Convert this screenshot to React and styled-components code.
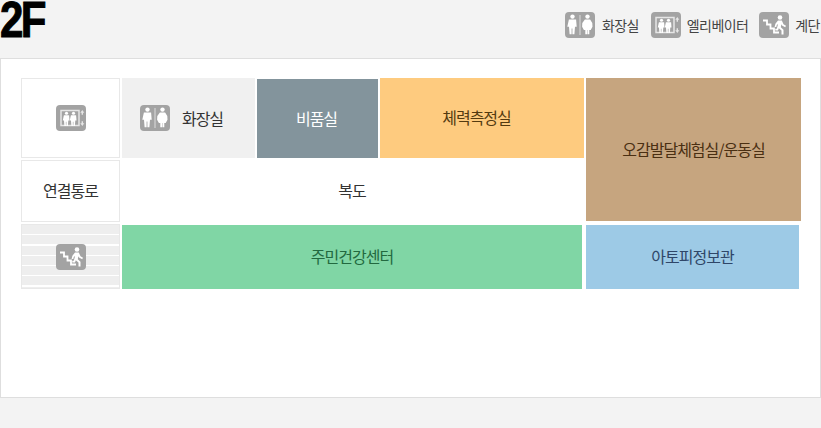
import React from "react";
import styled, { createGlobalStyle } from "styled-components";

const GlobalStyle = createGlobalStyle`
  html, body {
    margin: 0;
    padding: 0;
    background: #f3f3f3;
    overflow: hidden;
    font-family: "Noto Sans CJK KR", "Noto Sans", sans-serif;
  }
`;

const Person = ({ x, y = 0, scale = 1, fill = "#fff" }) => (
  <g transform={`translate(${x} ${y}) scale(${scale})`} fill={fill}>
    <circle cx="0" cy="-7.4" r="2.2" />
    <path d="M-3.600 -4.600h7.200l.6 7.400h-1.700l-.6 7.400h-2v-5.800h-.8v5.800h-2l-.6-7.400h-1.700z" />
  </g>
);

const Lady = ({ x, y = 0, scale = 1, fill = "#fff" }) => (
  <g transform={`translate(${x} ${y}) scale(${scale})`} fill={fill}>
    <circle cx="0" cy="-7.400" r="2.200" />
    <path d="M-2.600 -4.600h5.200l2.200 3.600 .2 3.800 -1.800 3.200h-1.400v4.200h-1.800v-4.200h-.4v4.200h-1.800v-4.200h-1.400l-1.800-3.200 .2-3.800z" />
  </g>
);

const ToiletIcon = () => (
  <IconSvg viewBox="0 0 30 26">
    <rect width="30" height="26" rx="4" fill="#a3a3a3" />
    <Person x={7.500} y={12} />
    <rect x="14.400" y="3" width="1.200" height="20" fill="#d4d4d4" />
    <Lady x={22.500} y={12} />
  </IconSvg>
);

const ElevatorIcon = () => (
  <IconSvg viewBox="0 0 30 26">
    <rect width="30" height="26" rx="4" fill="#a3a3a3" />
    <rect x="5" y="5.500" width="18" height="15" fill="none" stroke="#e6e6e6" strokeWidth="1.500" />
    <Person x={10.500} y={13.600} scale={0.72} />
    <Person x={17.500} y={13.600} scale={0.72} />
    <path d="M26.300 5l2 2.800h-1.300v2h-1.400v-2h-1.300zM26.300 21l2-2.800h-1.300v-2h-1.400v2h-1.300z" fill="#e6e6e6" />
  </IconSvg>
);

const StairsIcon = () => (
  <IconSvg viewBox="0 0 30 26">
    <rect width="30" height="26" rx="4" fill="#a3a3a3" />
    <path d="M4 8.500h4v4h3.500v4h3.500v4h5" fill="none" stroke="#fff" strokeWidth="1.800" />
    <circle cx="21" cy="5.500" r="2.300" fill="#fff" />
    <path d="M19 8.500h3.800l1.700 3.800 2.500 1.500-.8 1.400-3.200-1.600-.7-1.400-.5 3 2.700 2.600v4.700h-2v-3.900l-2.700-2.400-.8 2.300h-2.700v-1.800h1.500l1.300-4.800-1.300 1-.5 2h-1.700l.8-3.200z" fill="#fff" />
  </IconSvg>
);

const IconSvg = styled.svg`
  display: block;
  width: 30px;
  height: 26px;
  flex: none;
`;

const Page = styled.div`
  width: 821px;
  height: 428px;
  overflow: hidden;
  background: #f3f3f3;
`;

const Header = styled.header`
  height: 58px;
  display: flex;
  justify-content: space-between;
  align-items: flex-start;
`;

const FloorTitle = styled.h1`
  margin: 0;
  font-family: "Liberation Sans", Arial, sans-serif;
  font-size: 50px;
  font-weight: 700;
  line-height: 40px;
  letter-spacing: -3px;
  color: #000;
  -webkit-text-stroke: 1px #000;
  transform: scaleX(0.84);
  transform-origin: left top;
`;

const Legend = styled.ul`
  list-style: none;
  margin: 0;
  padding: 12px 0 0;
  display: flex;
  flex: none;
  width: 256px;
  gap: 11px;
  white-space: nowrap;
`;

const LegendItem = styled.li`
  display: flex;
  align-items: center;
  gap: ${(p) => p.$gap || "6px"};
  margin-right: ${(p) => p.$after || 0};
  font-size: 14px;
  line-height: 24px;
  letter-spacing: -0.6px;
  color: #444;
`;

const Panel = styled.main`
  box-sizing: border-box;
  width: 821px;
  height: 340px;
  background: #fff;
  border: 1px solid #dedede;
  padding: 19px 20px;
`;

const Plan = styled.div`
  display: grid;
  grid-template-columns: 99px 133px 121px 204px 215px;
  grid-template-rows: 80px 62px 65px;
  gap: 2px;
`;

const Room = styled.div`
  grid-column: ${(p) => p.$col || "auto"};
  grid-row: ${(p) => p.$row || "auto"};
  display: flex;
  align-items: center;
  justify-content: center;
  font-size: 16px;
  line-height: 22px;
  padding: 0 ${(p) => p.$shift || "0"} 2px 0;
  letter-spacing: -1px;
  background: ${(p) => p.$bg || "#fff"};
  color: ${(p) => p.$color || "#333"};
  margin: ${(p) => p.$margin || 0};
`;

const ToiletRoom = styled(Room)`
  gap: 12px;
  padding: 0 14px 0 0;
`;

const SideCell = styled(Room)`
  box-sizing: border-box;
  border: 1px solid #e8e8e8;
  padding-bottom: ${(p) => p.$pad || "0"};
`;

const StairsCell = styled(SideCell)`
  background: repeating-linear-gradient(
    to bottom,
    #eeeeee 0,
    #eeeeee 9px,
    #ffffff 9px,
    #ffffff 10.300px
  );
`;

export default function App() {
  return (
    <Page>
      <GlobalStyle />
      <Header>
        <FloorTitle>2F</FloorTitle>
        <Legend>
          <LegendItem $gap="7px" $after="1px"><ToiletIcon />화장실</LegendItem>
          <LegendItem><ElevatorIcon />엘리베이터</LegendItem>
          <LegendItem><StairsIcon />계단</LegendItem>
        </Legend>
      </Header>
      <Panel>
        <Plan>
          <SideCell $col="1" $row="1"><ElevatorIcon /></SideCell>
          <ToiletRoom $col="2" $row="1" $bg="#f0f0f0"><ToiletIcon />화장실</ToiletRoom>
          <Room $col="3" $row="1" $bg="#83949c" $color="#fff" $margin="1px 0 0" $shift="2px">비품실</Room>
          <Room $col="4" $row="1" $bg="#fecb7f" $color="#533a10" $shift="11px">체력측정실</Room>
          <Room $col="5" $row="1 / span 2" $bg="#c6a57f" $color="#4a2f12" $margin="0 0 1px">오감발달체험실/운동실</Room>
          <SideCell $col="1" $row="2" $pad="2px">연결통로</SideCell>
          <Room $col="2 / span 3" $row="2" $shift="2px">복도</Room>
          <StairsCell $col="1" $row="3"><StairsIcon /></StairsCell>
          <Room $col="2 / span 3" $row="3" $bg="#80d6a5" $color="#22693f" $margin="1px 2px 0 0">주민건강센터</Room>
          <Room $col="5" $row="3" $bg="#9dcae6" $color="#2f4668" $margin="1px 2px 0 0">아토피정보관</Room>
        </Plan>
      </Panel>
    </Page>
  );
}
